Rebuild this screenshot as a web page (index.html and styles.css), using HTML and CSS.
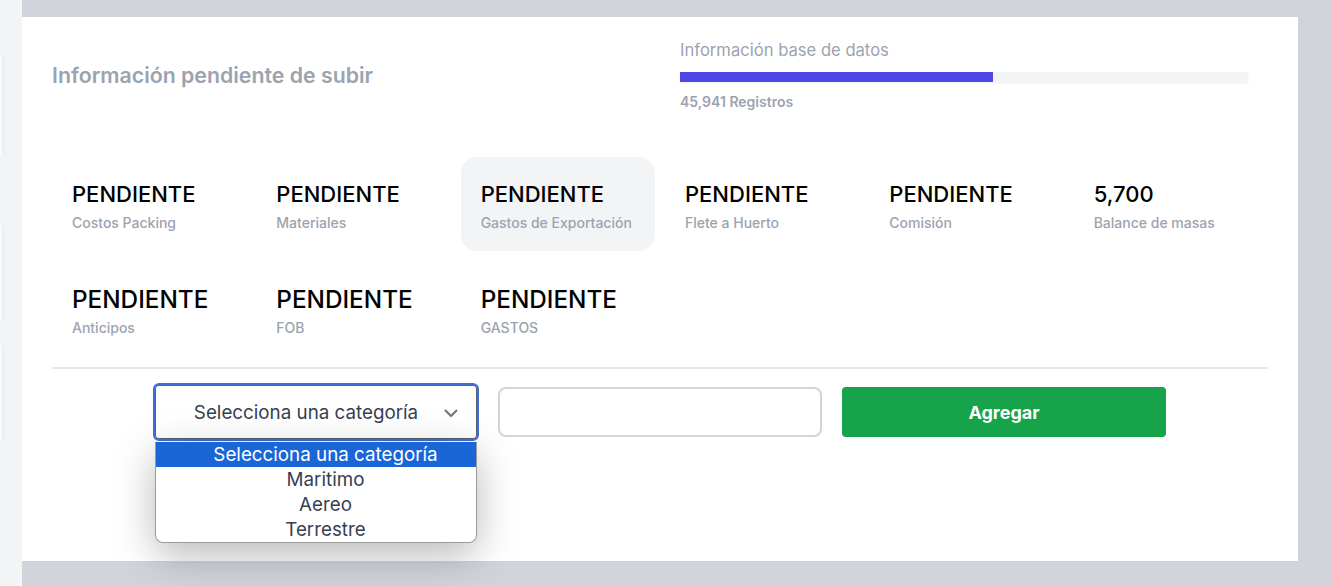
FILE: index.html
```html
<!DOCTYPE html>
<html lang="es">
<head>
<meta charset="utf-8">
<title>Información pendiente</title>
<link rel="stylesheet" href="styles.css">
</head>
<body>
<div class="layout">
  <aside class="sidebar">
    <div class="side-card c1"></div>
    <div class="side-card c2"></div>
    <div class="side-card c3"></div>
  </aside>
  <main class="main">
    <section class="card">
      <header class="head">
        <h2 class="title">Información pendiente de subir</h2>
        <div class="db">
          <div class="db-label">Información base de datos</div>
          <div class="bar"><div class="bar-fill" style="width:55.1%"></div></div>
          <div class="db-count">45,941 Registros</div>
        </div>
      </header>

      <div class="stats">
        <div class="stat"><div class="stat-val">PENDIENTE</div><div class="stat-lbl">Costos Packing</div></div>
        <div class="stat"><div class="stat-val">PENDIENTE</div><div class="stat-lbl">Materiales</div></div>
        <div class="stat active"><div class="stat-val">PENDIENTE</div><div class="stat-lbl">Gastos de Exportación</div></div>
        <div class="stat"><div class="stat-val">PENDIENTE</div><div class="stat-lbl">Flete a Huerto</div></div>
        <div class="stat"><div class="stat-val">PENDIENTE</div><div class="stat-lbl">Comisión</div></div>
        <div class="stat"><div class="stat-val">5,700</div><div class="stat-lbl">Balance de masas</div></div>
        <div class="stat big"><div class="stat-val">PENDIENTE</div><div class="stat-lbl">Anticipos</div></div>
        <div class="stat big"><div class="stat-val">PENDIENTE</div><div class="stat-lbl">FOB</div></div>
        <div class="stat big"><div class="stat-val">PENDIENTE</div><div class="stat-lbl">GASTOS</div></div>
      </div>

      <hr class="divider">

      <div class="form">
        <div class="select-wrap">
          <div class="select">
            <span class="select-text">Selecciona una categoría</span>
            <svg class="chev" width="14" height="9" viewBox="0 0 14 9"><path d="M1.5 1.5 L7 7 L12.5 1.5" fill="none" stroke="#6b7280" stroke-width="2" stroke-linecap="round" stroke-linejoin="round"/></svg>
          </div>
          <ul class="options">
            <li class="opt sel">Selecciona una categoría</li>
            <li class="opt">Maritimo</li>
            <li class="opt">Aereo</li>
            <li class="opt">Terrestre</li>
          </ul>
        </div>
        <div class="input"></div>
        <button class="btn">Agregar</button>
      </div>
    </section>
  </main>
</div>
</body>
</html>
```

FILE: styles.css
```css
* { box-sizing: border-box; }
html, body { margin: 0; padding: 0; }
body {
  background: #d1d5db;
  font-family: Inter, "Noto Sans", Arial, sans-serif;
  width: 1331px;
  height: 586px;
  overflow: hidden;
}
.layout {
  display: flex;
  height: 586px;
}
.sidebar {
  width: 22px;
  flex: none;
  background: #f3f4f6;
  display: flex;
  flex-direction: column;
  padding-top: 55px;
}
.side-card {
  width: 2px;
  height: 100px;
  background: #f9fafb;
  box-shadow: 2px 0 4px rgba(0,0,0,0.06);
}
.side-card.c2 { margin-top: 70px; height: 95px; }
.side-card.c3 { margin-top: 25px; height: 95px; }

.main {
  flex: none;
  padding-top: 17px;
}
.card {
  position: relative;
  width: 1276px;
  height: 544px;
  background: #ffffff;
  padding: 21px 30px 0 30px;
}
.head {
  display: grid;
  grid-template-columns: 1fr 1fr;
  align-items: center;
}
.title {
  margin: 0;
  font-size: 21.3px;
  font-weight: 600;
  color: #9ca3af;
}
.db { padding: 0 20px; }
.db-label {
  font-size: 16.6px;
  line-height: 24px;
  color: #9ca3af;
}
.bar {
  margin-top: 10px;
  height: 10px;
  background: #f3f4f6;
  box-shadow: 0 1px 3px rgba(0,0,0,0.08);
}
.bar-fill {
  height: 100%;
  background: #4f46e5;
}
.db-count {
  margin-top: 10px;
  font-size: 14px;
  line-height: 20px;
  font-weight: 600;
  color: #9ca3af;
}

.stats {
  margin-top: 45px;
  display: grid;
  grid-template-columns: repeat(6, 1fr);
  column-gap: 10px;
  row-gap: 11px;
}
.stat {
  height: 94px;
  padding: 20px;
  border-radius: 16px;
}
.stat.active { background: #f3f4f6; }
.stat-val {
  font-size: 22px;
  line-height: 34px;
  font-weight: 500;
  color: #000;
}
.stat.big .stat-val {
  font-size: 24.3px;
}
.stat-lbl {
  margin-top: 2px;
  font-size: 14px;
  line-height: 20px;
  font-weight: 500;
  color: #9ca3af;
  white-space: nowrap;
}

.divider {
  margin: 11px 0 0 0;
  border: 0;
  height: 2px;
  background: #e5e7eb;
}

.form {
  margin-top: 14px;
  display: flex;
  justify-content: center;
  align-items: center;
  gap: 20px;
}
.select-wrap {
  position: relative;
  width: 324px;
}
.select {
  margin: 0 -1px;
  height: 58px;
  border: 2px solid #3e6fd8;
  border-radius: 6px;
  box-shadow: inset 0 0 0 1px #5a6470;
  display: flex;
  align-items: center;
  justify-content: center;
  position: relative;
  background: #fff;
}
.select-text {
  font-size: 18.8px;
  color: #374151;
  margin-right: 20px;
}
.chev {
  position: absolute;
  right: 19px;
  top: 24px;
}
.options {
  position: absolute;
  left: 1px;
  top: 59px;
  width: 322px;
  margin: 0;
  padding: 0;
  list-style: none;
  background: #fff;
  border: 1px solid #9a9a9a;
  border-top: 0;
  border-radius: 0 0 8px 8px;
  box-shadow: 0 12px 40px rgba(0,0,0,0.28);
  overflow: hidden;
  z-index: 5;
}
.opt {
  height: 25px;
  line-height: 25px;
  text-align: center;
  padding-left: 19px;
  font-size: 18.8px;
  color: #374151;
}
.opt.sel {
  background: #1a66d6;
  color: #fff;
}
.input {
  width: 324px;
  height: 50px;
  border: 2px solid #d1d5db;
  border-radius: 8px;
  background: #fff;
}
.btn {
  width: 324px;
  height: 50px;
  border: 0;
  border-radius: 4px;
  background: #16a34a;
  color: #fff;
  font-family: inherit;
  font-size: 18px;
  font-weight: 700;
}
```
